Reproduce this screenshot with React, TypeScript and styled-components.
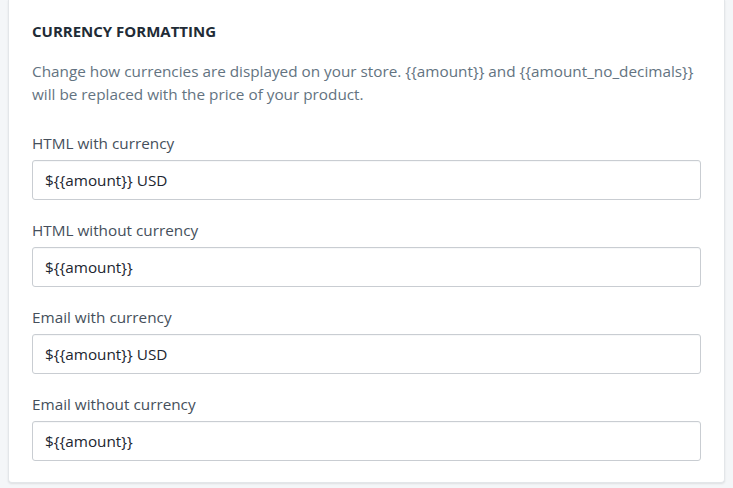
import React from "react";
import styled, { createGlobalStyle } from "styled-components";

const GlobalStyle = createGlobalStyle`
  html, body {
    margin: 0;
    padding: 0;
    background: #f4f6f8;
  }
  body {
    font-family: "Open Sans", "Noto Sans", sans-serif;
  }
`;

const Page = styled.div`
  width: 733px;
  height: 488px;
  overflow: hidden;
  padding: 0 8px 0 8px;
  box-sizing: border-box;
`;

const Card = styled.section`
  background: #ffffff;
  border: 1px solid #e3e6e9;
  border-top: none;
  border-radius: 0 0 4px 4px;
  box-shadow: 0 1px 2px rgba(63, 63, 68, 0.12);
  padding: 20px 23px 21px 23px;
`;

const Title = styled.h2`
  margin: 0;
  font-size: 15px;
  font-weight: 700;
  line-height: 22px;
  color: #212b36;
`;

const Description = styled.p`
  margin: 18px 0 0 0;
  font-size: 15.3px;
  line-height: 23px;
  color: #637381;
`;

const Fields = styled.div`
  display: flex;
  flex-direction: column;
  gap: 20px;
  margin-top: 27px;
`;

const Field = styled.label`
  display: flex;
  flex-direction: column;
  gap: 6px;
`;

const Label = styled.span`
  font-size: 15.3px;
  line-height: 21px;
  color: #454f5b;
`;

const Input = styled.input`
  box-sizing: border-box;
  width: 100%;
  height: 40px;
  padding: 0 12px;
  border: 1px solid #c9cdd2;
  border-radius: 3px;
  background: #ffffff;
  font-family: "Open Sans", "Noto Sans", sans-serif;
  font-size: 15.3px;
  color: #1c2630;
  box-shadow: inset 0 1px 0 rgba(99, 115, 129, 0.05);
  outline: none;
`;

const fields = [
  { label: "HTML with currency", value: "${{amount}} USD" },
  { label: "HTML without currency", value: "${{amount}}" },
  { label: "Email with currency", value: "${{amount}} USD" },
  { label: "Email without currency", value: "${{amount}}" },
];

export default function App() {
  return (
    <>
      <GlobalStyle />
      <Page>
        <Card>
          <Title>CURRENCY FORMATTING</Title>
          <Description>
            Change how currencies are displayed on your store. {"{{amount}}"} and{" "}
            {"{{amount_no_decimals}}"} will be replaced with the price of your product.
          </Description>
          <Fields>
            {fields.map((f) => (
              <Field key={f.label}>
                <Label>{f.label}</Label>
                <Input defaultValue={f.value} readOnly />
              </Field>
            ))}
          </Fields>
        </Card>
      </Page>
    </>
  );
}
